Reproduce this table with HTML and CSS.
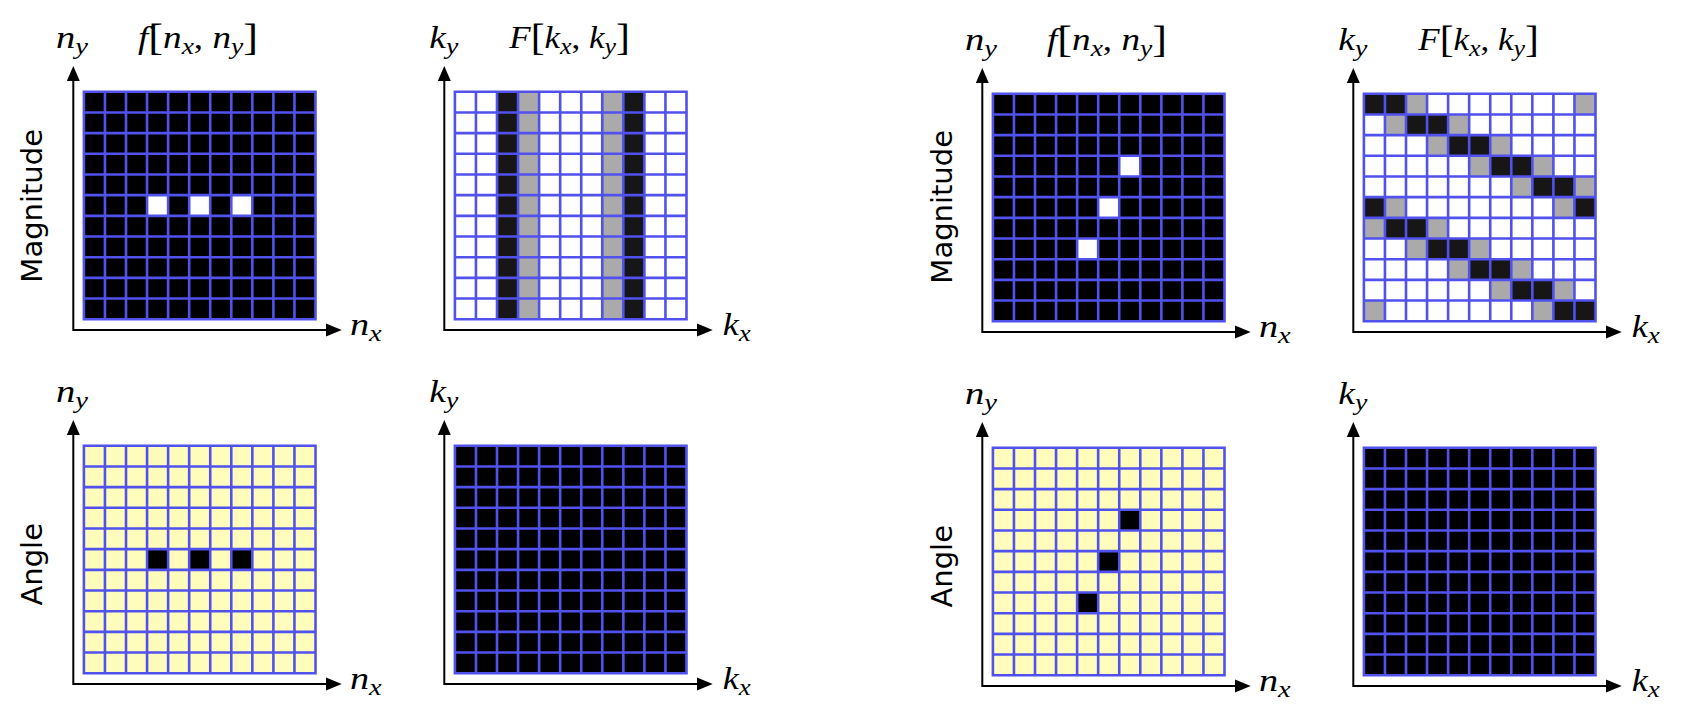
FILE: index.html
```html
<!DOCTYPE html>
<html lang="en">
<head>
<meta charset="utf-8">
<title>2D DFT magnitude and angle</title>
<link rel="stylesheet" href="styles.css">
</head>
<body>
<main class="figure">
  <section class="group">
    <div class="rowlabel"><span>Magnitude</span></div>
    <svg class="panel" data-grid="fmagA" viewBox="0 0 371 354">
      <text class="math" x="1" y="48" textLength="32" lengthAdjust="spacingAndGlyphs">n<tspan class="sub" dy="5.5">y</tspan></text>
      <text class="math" x="83" y="48" textLength="120" lengthAdjust="spacingAndGlyphs">f<tspan class="up br" dy="2">[</tspan><tspan dy="-2">n</tspan><tspan class="sub" dy="5.5">x</tspan><tspan class="up" dy="-5.5">, </tspan>n<tspan class="sub" dy="5.5">y</tspan><tspan class="up br" dy="-3.5">]</tspan></text>
      <g class="cells"></g>
      <path class="axis" d="M18.3 81 V330 H271"/>
      <path class="arrow" d="M11.8 81 L24.8 81 L18.3 66 Z"/>
      <path class="arrow" d="M271 323.5 L271 336.5 L286.7 330 Z"/>
      <text class="math" x="295" y="335" textLength="31.7" lengthAdjust="spacingAndGlyphs">n<tspan class="sub" dy="5.5">x</tspan></text>
    </svg>
    <svg class="panel" data-grid="FmagA" viewBox="0 0 371 354">
      <text class="math" x="3.3" y="48" textLength="29" lengthAdjust="spacingAndGlyphs">k<tspan class="sub" dy="5.5">y</tspan></text>
      <text class="math" x="83.3" y="48" textLength="120.7" lengthAdjust="spacingAndGlyphs">F<tspan class="up br" dy="2">[</tspan><tspan dy="-2">k</tspan><tspan class="sub" dy="5.5">x</tspan><tspan class="up" dy="-5.5">, </tspan>k<tspan class="sub" dy="5.5">y</tspan><tspan class="up br" dy="-3.5">]</tspan></text>
      <g class="cells"></g>
      <path class="axis" d="M18.3 81 V330 H271"/>
      <path class="arrow" d="M11.8 81 L24.8 81 L18.3 66 Z"/>
      <path class="arrow" d="M271 323.5 L271 336.5 L286.7 330 Z"/>
      <text class="math" x="296.7" y="335" textLength="28" lengthAdjust="spacingAndGlyphs">k<tspan class="sub" dy="5.5">x</tspan></text>
    </svg>
    <div class="rowlabel angle"><span>Angle</span></div>
    <svg class="panel" data-grid="fangA" viewBox="0 0 371 354">
      <text class="math" x="1" y="48" textLength="32" lengthAdjust="spacingAndGlyphs">n<tspan class="sub" dy="5.5">y</tspan></text>
      <g class="cells"></g>
      <path class="axis" d="M18.3 81 V330 H271"/>
      <path class="arrow" d="M11.8 81 L24.8 81 L18.3 66 Z"/>
      <path class="arrow" d="M271 323.5 L271 336.5 L286.7 330 Z"/>
      <text class="math" x="295" y="335" textLength="31.7" lengthAdjust="spacingAndGlyphs">n<tspan class="sub" dy="5.5">x</tspan></text>
    </svg>
    <svg class="panel" data-grid="FangA" viewBox="0 0 371 354">
      <text class="math" x="3.3" y="48" textLength="29" lengthAdjust="spacingAndGlyphs">k<tspan class="sub" dy="5.5">y</tspan></text>
      <g class="cells"></g>
      <path class="axis" d="M18.3 81 V330 H271"/>
      <path class="arrow" d="M11.8 81 L24.8 81 L18.3 66 Z"/>
      <path class="arrow" d="M271 323.5 L271 336.5 L286.7 330 Z"/>
      <text class="math" x="296.7" y="335" textLength="28" lengthAdjust="spacingAndGlyphs">k<tspan class="sub" dy="5.5">x</tspan></text>
    </svg>
  </section>

  <section class="group right">
    <div class="rowlabel"><span>Magnitude</span></div>
    <svg class="panel" data-grid="fmagC" viewBox="0 0 371 354">
      <text class="math" x="1" y="48" textLength="32" lengthAdjust="spacingAndGlyphs">n<tspan class="sub" dy="5.5">y</tspan></text>
      <text class="math" x="83" y="48" textLength="120" lengthAdjust="spacingAndGlyphs">f<tspan class="up br" dy="2">[</tspan><tspan dy="-2">n</tspan><tspan class="sub" dy="5.5">x</tspan><tspan class="up" dy="-5.5">, </tspan>n<tspan class="sub" dy="5.5">y</tspan><tspan class="up br" dy="-3.5">]</tspan></text>
      <g class="cells"></g>
      <path class="axis" d="M18.3 81 V330 H271"/>
      <path class="arrow" d="M11.8 81 L24.8 81 L18.3 66 Z"/>
      <path class="arrow" d="M271 323.5 L271 336.5 L286.7 330 Z"/>
      <text class="math" x="295" y="335" textLength="31.7" lengthAdjust="spacingAndGlyphs">n<tspan class="sub" dy="5.5">x</tspan></text>
    </svg>
    <svg class="panel" data-grid="FmagC" viewBox="0 0 371 354">
      <text class="math" x="3.3" y="48" textLength="29" lengthAdjust="spacingAndGlyphs">k<tspan class="sub" dy="5.5">y</tspan></text>
      <text class="math" x="83.3" y="48" textLength="120.7" lengthAdjust="spacingAndGlyphs">F<tspan class="up br" dy="2">[</tspan><tspan dy="-2">k</tspan><tspan class="sub" dy="5.5">x</tspan><tspan class="up" dy="-5.5">, </tspan>k<tspan class="sub" dy="5.5">y</tspan><tspan class="up br" dy="-3.5">]</tspan></text>
      <g class="cells"></g>
      <path class="axis" d="M18.3 81 V330 H271"/>
      <path class="arrow" d="M11.8 81 L24.8 81 L18.3 66 Z"/>
      <path class="arrow" d="M271 323.5 L271 336.5 L286.7 330 Z"/>
      <text class="math" x="296.7" y="335" textLength="28" lengthAdjust="spacingAndGlyphs">k<tspan class="sub" dy="5.5">x</tspan></text>
    </svg>
    <div class="rowlabel angle"><span>Angle</span></div>
    <svg class="panel" data-grid="fangC" viewBox="0 0 371 354">
      <text class="math" x="1" y="48" textLength="32" lengthAdjust="spacingAndGlyphs">n<tspan class="sub" dy="5.5">y</tspan></text>
      <g class="cells"></g>
      <path class="axis" d="M18.3 81 V330 H271"/>
      <path class="arrow" d="M11.8 81 L24.8 81 L18.3 66 Z"/>
      <path class="arrow" d="M271 323.5 L271 336.5 L286.7 330 Z"/>
      <text class="math" x="295" y="335" textLength="31.7" lengthAdjust="spacingAndGlyphs">n<tspan class="sub" dy="5.5">x</tspan></text>
    </svg>
    <svg class="panel" data-grid="FangC" viewBox="0 0 371 354">
      <text class="math" x="3.3" y="48" textLength="29" lengthAdjust="spacingAndGlyphs">k<tspan class="sub" dy="5.5">y</tspan></text>
      <g class="cells"></g>
      <path class="axis" d="M18.3 81 V330 H271"/>
      <path class="arrow" d="M11.8 81 L24.8 81 L18.3 66 Z"/>
      <path class="arrow" d="M271 323.5 L271 336.5 L286.7 330 Z"/>
      <text class="math" x="296.7" y="335" textLength="28" lengthAdjust="spacingAndGlyphs">k<tspan class="sub" dy="5.5">x</tspan></text>
    </svg>
  </section>
</main>
<script src="script.js"></script>
</body>
</html>
```

FILE: styles.css
```css
html, body {
  margin: 0;
  padding: 0;
  background: #ffffff;
  overflow: hidden;
}

.figure {
  display: flex;
  gap: 112.4px;
  width: 1720px;
}

.group {
  display: grid;
  grid-template-columns: 55px 371px 371px;
  grid-template-rows: 354px 354px;
}

.group.right {
  padding-top: 1.5px;
}

.rowlabel {
  display: flex;
  align-items: center;
  align-self: start;
  height: 230px;
  padding-top: 90.5px;
}

.rowlabel.angle {
  padding-top: 95.5px;
}

.rowlabel span {
  writing-mode: vertical-rl;
  transform: rotate(180deg);
  font-family: "DejaVu Sans", sans-serif;
  font-size: 29px;
  line-height: 29px;
  margin-left: 18.3px;
  color: #000;
  white-space: nowrap;
}

.panel {
  display: block;
  width: 371px;
  height: 354px;
  overflow: visible;
}

.math {
  font-family: "Liberation Serif", "DejaVu Serif", serif;
  font-style: italic;
  font-size: 31px;
  fill: #000;
}

.math .sub {
  font-size: 23px;
}

.math .up {
  font-style: normal;
}

.math .br {
  font-size: 37px;
}

.axis {
  fill: none;
  stroke: #000;
  stroke-width: 2;
}

.arrow {
  fill: #000;
  stroke: none;
}

.gridlines {
  fill: none;
  stroke: #5151ee;
  stroke-width: 2.6;
}
```

FILE: script.js
```javascript
(function () {
  var COLORS = {
    K: '#000000',
    D: '#161616',
    G: '#aaaaaa',
    W: '#ffffff',
    Y: '#fffcbc'
  };

  function fill(ch) {
    var rows = [];
    for (var i = 0; i < 11; i++) rows.push(new Array(12).join(ch));
    return rows;
  }

  function setCells(rows, cells, ch) {
    cells.forEach(function (rc) {
      var r = rows[rc[0]].split('');
      r[rc[1]] = ch;
      rows[rc[0]] = r.join('');
    });
    return rows;
  }

  var PATTERNS = {
    fmagA: setCells(fill('K'), [[5, 3], [5, 5], [5, 7]], 'W'),
    FmagA: (function () {
      var rows = [];
      for (var i = 0; i < 11; i++) rows.push('WWDGWWWGDWW');
      return rows;
    })(),
    fangA: setCells(fill('Y'), [[5, 3], [5, 5], [5, 7]], 'K'),
    FangA: fill('K'),
    fmagC: setCells(fill('K'), [[3, 6], [5, 5], [7, 4]], 'W'),
    FmagC: [
      'DDGWWWWWWWG',
      'WGDDGWWWWWW',
      'WWWGDDGWWWW',
      'WWWWWGDDGWW',
      'WWWWWWWGDDG',
      'DGWWWWWWWGD',
      'GDDGWWWWWWW',
      'WWGDDGWWWWW',
      'WWWWGDDGWWW',
      'WWWWWWGDDGW',
      'GWWWWWWWGDD'
    ],
    fangC: setCells(fill('Y'), [[3, 6], [5, 5], [7, 4]], 'K'),
    FangC: fill('K')
  };

  var NS = 'http://www.w3.org/2000/svg';
  var GX = 27.6, GY = 90.5, GW = 234.2, GH = 230, LW = 2.6;
  var PW = (GW - LW) / 11, PH = (GH - LW) / 11;

  document.querySelectorAll('svg.panel').forEach(function (svg) {
    var rows = PATTERNS[svg.getAttribute('data-grid')];
    var g = svg.querySelector('.cells');
    if (!rows || !g) return;
    for (var r = 0; r < 11; r++) {
      for (var c = 0; c < 11; c++) {
        var rect = document.createElementNS(NS, 'rect');
        rect.setAttribute('x', (GX + LW / 2 + c * PW).toFixed(2));
        rect.setAttribute('y', (GY + LW / 2 + r * PH).toFixed(2));
        rect.setAttribute('width', PW.toFixed(2));
        rect.setAttribute('height', PH.toFixed(2));
        rect.setAttribute('fill', COLORS[rows[r].charAt(c)]);
        g.appendChild(rect);
      }
    }
    var d = '';
    for (var i = 0; i <= 11; i++) {
      var x = GX + LW / 2 + i * PW;
      var y = GY + LW / 2 + i * PH;
      d += 'M' + x.toFixed(2) + ' ' + GY + 'V' + (GY + GH).toFixed(2);
      d += 'M' + GX + ' ' + y.toFixed(2) + 'H' + (GX + GW).toFixed(2);
    }
    var path = document.createElementNS(NS, 'path');
    path.setAttribute('d', d);
    path.setAttribute('class', 'gridlines');
    g.appendChild(path);
  });
})();
```
